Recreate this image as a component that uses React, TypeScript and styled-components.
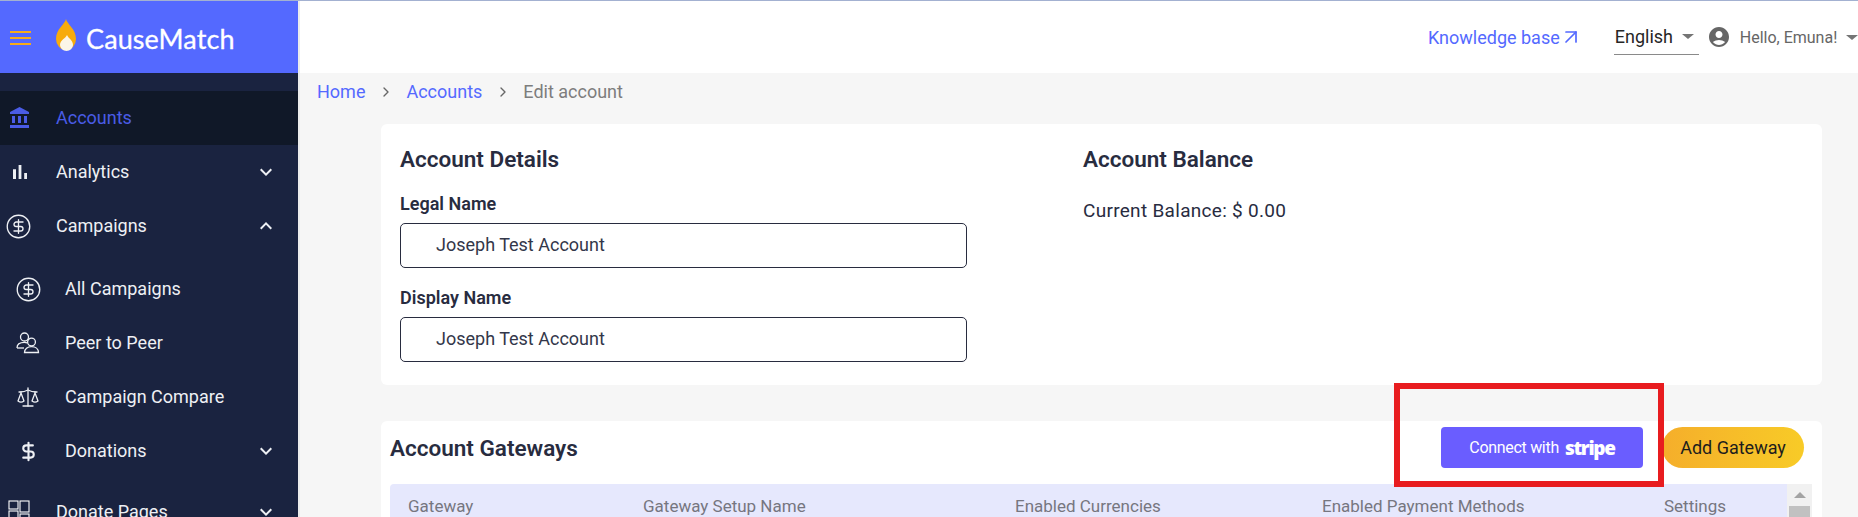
import * as React from 'react';
import styled, { createGlobalStyle } from 'styled-components';
import { ArrowUpRight, ChevronRight, CircleDollarSign, DollarSign, Scale } from 'lucide-react';

const GlobalStyle = createGlobalStyle`
  html, body {
    margin: 0;
    padding: 0;
    height: 100%;
    overflow: hidden;
    background: #f6f6f6;
    font-family: Roboto, "Liberation Sans", sans-serif;
  }
`;

const Page = styled.div`
  width: 1858px;
  height: 517px;
  overflow: hidden;
  border-top: 1px solid #a3b1d1;
  box-sizing: border-box;
  display: flex;
`;

const Sidebar = styled.aside`
  width: 298px;
  flex: none;
  background: #1a2340;
  border-right: 2px solid #ececec;
`;

const Brand = styled.div`
  height: 72px;
  background: #5469ff;
  display: flex;
  align-items: center;
  padding-left: 10px;
`;

const Burger = styled.span`
  width: 21px;
  height: 14px;
  border-top: 2px solid #f7ab1a;
  border-bottom: 2px solid #f7ab1a;
  box-sizing: border-box;
  position: relative;
  margin-right: 24px;
  margin-top: 2px;
  &::after {
    content: '';
    position: absolute;
    left: 0;
    right: 0;
    top: 4px;
    height: 2px;
    background: #f7ab1a;
  }
`;

const Flame = styled.svg`
  margin-top: -4px;
  flex: none;
`;

const Wordmark = styled.span`
  font-family: Lato, sans-serif;
  font-size: 27px;
  font-weight: 400;
  color: #fff;
  margin-left: 9px;
  margin-top: 3px;
  letter-spacing: 0.1px;
  -webkit-text-stroke: 0.3px #fff;
`;

const Nav = styled.nav`
  padding-top: 18px;
`;

const NavRow = styled.div<{ $active?: boolean; $sub?: boolean; $gapTop?: number }>`
  height: 54px;
  display: flex;
  align-items: center;
  padding-left: ${(p) => (p.$sub ? 16 : 8)}px;
  padding-right: 20px;
  margin-top: ${(p) => p.$gapTop ?? 0}px;
  background: ${(p) => (p.$active ? '#101828' : 'transparent')};
  color: ${(p) => (p.$active ? '#4a5ce6' : '#eef0f4')};
  font-size: 18px;
`;

const NavIcon = styled.span<{ $sub?: boolean }>`
  width: 24px;
  height: 24px;
  flex: none;
  display: flex;
  align-items: center;
  justify-content: center;
  margin-right: ${(p) => (p.$sub ? 25 : 24)}px;
`;

const NavLabel = styled.span`
  flex: 1;
  padding-bottom: 2px;
`;

const TopCoin = styled(CircleDollarSign)`
  margin-left: -3px;
  flex: none;
`;

const SubCoin = styled(CircleDollarSign)`
  flex: none;
`;

const TopBar = styled.header`
  height: 72px;
  background: #fff;
  display: flex;
  align-items: center;
`;

const KnowledgeLink = styled.a`
  display: flex;
  flex: none;
  align-items: center;
  margin-left: 1128px;
  color: #5469ff;
  font-size: 18px;
  white-space: nowrap;
  svg {
    margin-left: -1px;
    flex: none;
  }
`;

const LangSelect = styled.div`
  width: 85px;
  height: 36px;
  flex: none;
  margin-left: 31px;
  border-bottom: 1px solid #8a8a8a;
  box-sizing: border-box;
  display: flex;
  align-items: center;
  padding-left: 1px;
  font-size: 18px;
  color: #262626;
`;

const Caret = styled.span`
  width: 0;
  height: 0;
  margin-left: 9px;
  border-left: 6px solid transparent;
  border-right: 6px solid transparent;
  border-top: 5px solid #757575;
`;

const User = styled.div`
  display: flex;
  align-items: center;
  margin-left: 8px;
  color: #666;
  font-size: 16px;
  white-space: nowrap;
  svg {
    margin-right: 9px;
  }
`;

const Main = styled.main`
  flex: 1;
  min-width: 0;
`;

const Crumbs = styled.div`
  height: 37px;
  padding: 0 0 2px 17px;
  display: flex;
  align-items: center;
  gap: 12.5px;
  font-size: 18px;
  color: #7d7d7d;
  a {
    color: #5469ff;
  }
  svg {
    color: #666;
  }
`;

const Content = styled.div`
  padding: 12px 36px 0 81px;
`;

const Card = styled.section`
  background: #fff;
  border-radius: 6px;
`;

const DetailsCard = styled(Card)`
  height: 261px;
  margin-bottom: 36px;
  padding: 22px 19px 0;
  box-sizing: border-box;
  display: grid;
  grid-template-columns: 683px 1fr;
`;

const Heading = styled.h2`
  margin: 0;
  font-size: 22.5px;
  line-height: 26px;
  font-weight: 600;
  color: #282c3f;
`;

const FieldLabel = styled.div`
  margin-top: 22px;
  margin-bottom: 9px;
  font-size: 18px;
  line-height: 20px;
  font-weight: 600;
  color: #282c3f;
`;

const NameBox = styled.div`
  width: 567px;
  height: 45px;
  box-sizing: border-box;
  border: 1px solid #282c3f;
  border-radius: 5px;
  padding: 0 0 2px 35px;
  display: flex;
  align-items: center;
  font-size: 18px;
  color: #33374a;
  & + div {
    margin-top: 20px;
  }
`;

const BalanceText = styled.p`
  margin: 29px 0 0;
  font-size: 19px;
  line-height: 20px;
  letter-spacing: 0.3px;
  color: #282c3f;
`;

const GatewaysCard = styled(Card)`
  position: relative;
  padding: 6px 9px 0;
  height: 120px;
`;

const GatewayHeader = styled.div`
  display: flex;
  align-items: center;
  height: 41px;
  margin-bottom: 16px;
`;

const GatewayTitle = styled(Heading)`
  flex: 1;
`;

const StripeButton = styled.button`
  width: 202px;
  height: 41px;
  border: 0;
  border-radius: 4px;
  background: #6a5dff;
  color: #fff;
  font-family: Roboto, sans-serif;
  font-size: 16px;
  display: flex;
  align-items: center;
  justify-content: center;
  gap: 6px;
  letter-spacing: -0.3px;
`;

const StripeWord = styled.span`
  font-family: "Open Sans", sans-serif;
  font-size: 19px;
  font-weight: 800;
  letter-spacing: -1.3px;
`;

const AddButton = styled.button`
  width: 142px;
  height: 41px;
  margin-left: 19px;
  margin-right: 9px;
  border: 0;
  border-radius: 21px;
  background: linear-gradient(90deg, #f5ae2b, #f8cb27);
  color: #1d1d1d;
  font-family: Roboto, sans-serif;
  font-size: 18px;
  padding: 0;
`;

const RedBox = styled.div`
  position: absolute;
  left: 1013px;
  top: -38px;
  width: 270px;
  height: 104px;
  box-sizing: border-box;
  border: 6px solid #e81c1f;
  pointer-events: none;
`;

const TableRow = styled.div`
  display: flex;
`;

const TableHead = styled.div`
  width: 1397px;
  height: 60px;
  background: #e6e8fd;
  border-radius: 4px 0 0 0;
  display: grid;
  grid-template-columns: 235px 372px 307px 342px 1fr;
  padding: 13px 0 0 18px;
  box-sizing: border-box;
  font-size: 17px;
  line-height: 19px;
  color: #767680;
`;

const Scrollbar = styled.div`
  width: 25px;
  background: #f1f1f1;
  padding-top: 8px;
  box-sizing: border-box;
`;

const ScrollArrow = styled.div`
  width: 0;
  height: 0;
  margin: 0 auto 8px;
  border-left: 6px solid transparent;
  border-right: 6px solid transparent;
  border-bottom: 6px solid #a3a3a3;
`;

const ScrollThumb = styled.div`
  height: 40px;
  margin: 0 2px;
  background: #c1c1c1;
`;

const MuiIcon = ({ d, size = 24, color = 'currentColor' }: { d: string; size?: number; color?: string }) => (
  <svg width={size} height={size} viewBox="0 0 24 24" fill={color}>
    <path d={d} />
  </svg>
);

const BANK = 'M4 10v7h3v-7H4zm6 0v7h3v-7h-3zM2 22h19v-3H2v3zm14-12v7h3v-7h-3zm-4.5-9L2 6v2h19V6l-9.5-5z';
const BARS = 'M5 9.2h3V19H5zM10.6 5h2.8v14h-2.8zm5.6 8H19v6h-2.8z';
const DOWN = 'M16.59 8.59 12 13.17 7.41 8.59 6 10l6 6 6-6z';
const UP = 'm12 8-6 6 1.41 1.41L12 10.83l4.59 4.58L18 14z';
const PERSON =
  'M12 2C6.48 2 2 6.48 2 12s4.48 10 10 10 10-4.48 10-10S17.52 2 12 2zm0 4c1.93 0 3.5 1.57 3.5 3.5S13.93 13 12 13s-3.5-1.57-3.5-3.5S10.07 6 12 6zm0 14c-2.03 0-4.43-.82-6.14-2.88C7.55 15.8 9.68 15 12 15s4.45.8 6.14 2.12C16.43 19.18 14.03 20 12 20z';

const FlameLogo = () => (
  <Flame width="22" height="32" viewBox="0 0 22 32">
    <path d="M11 0c1 5 10 10 10 20a10 11 0 0 1-20 0C1 10 10 5 11 0z" fill="#f7ab0c" />
    <path d="M12 16c1 3 6 5 6 10a6 5.500 0 0 1-13 0c0-5 6-7 7-10z" fill="#fbf5e8" />
  </Flame>
);

const PagesIcon = () => (
  <svg width="24" height="24" viewBox="0 0 24 24" fill="none" stroke="#fff" strokeWidth="1.1">
    <rect x="1" y="1" width="9" height="8" />
    <rect x="12" y="1" width="9" height="11" />
    <rect x="1" y="11" width="9" height="11" />
    <rect x="12" y="14" width="9" height="8" />
  </svg>
);

// two overlapping people, the front one lower and to the right
const PeerIcon = () => (
  <svg width="24" height="24" viewBox="0 0 24 24" fill="none" stroke="#eef0f4" strokeWidth="1.3">
    <circle cx="8.5" cy="6" r="4" />
    <path d="M1 17c0-3.5 3-5.6 7.500-5.600 1 0 2 .1 2.800.4" />
    <path d="M1 17h7" />
    <circle cx="15.5" cy="11" r="3.9" />
    <path d="M8.500 21.500c0-3.500 3-5.800 7-5.800s7 2.300 7 5.800z" />
  </svg>
);

export default function App() {
  return (
    <>
      <GlobalStyle />
      <Page>
        <Sidebar>
          <Brand>
            <Burger />
            <FlameLogo />
            <Wordmark>CauseMatch</Wordmark>
          </Brand>
          <Nav>
            <NavRow $active>
              <NavIcon><MuiIcon d={BANK} /></NavIcon>
              <NavLabel>Accounts</NavLabel>
            </NavRow>
            <NavRow>
              <NavIcon><MuiIcon d={BARS} size={28} /></NavIcon>
              <NavLabel>Analytics</NavLabel>
              <MuiIcon d={DOWN} />
            </NavRow>
            <NavRow>
              <NavIcon><TopCoin size={27} strokeWidth={1.2} /></NavIcon>
              <NavLabel>Campaigns</NavLabel>
              <MuiIcon d={UP} />
            </NavRow>
            <NavRow $sub $gapTop={9}>
              <NavIcon $sub><SubCoin size={27} strokeWidth={1.2} /></NavIcon>
              <NavLabel>All Campaigns</NavLabel>
            </NavRow>
            <NavRow $sub>
              <NavIcon $sub><PeerIcon /></NavIcon>
              <NavLabel>Peer to Peer</NavLabel>
            </NavRow>
            <NavRow $sub>
              <NavIcon $sub><Scale size={24} strokeWidth={1.3} /></NavIcon>
              <NavLabel>Campaign Compare</NavLabel>
            </NavRow>
            <NavRow $sub>
              <NavIcon $sub><DollarSign size={21} strokeWidth={2.4} /></NavIcon>
              <NavLabel>Donations</NavLabel>
              <MuiIcon d={DOWN} />
            </NavRow>
            <NavRow $gapTop={7}>
              <NavIcon><PagesIcon /></NavIcon>
              <NavLabel>Donate Pages</NavLabel>
              <MuiIcon d={DOWN} />
            </NavRow>
          </Nav>
        </Sidebar>
        <Main>
          <TopBar>
            <KnowledgeLink>
              Knowledge base
              <ArrowUpRight size={24} strokeWidth={1.7} />
            </KnowledgeLink>
            <LangSelect>
              English
              <Caret />
            </LangSelect>
            <User>
              <MuiIcon d={PERSON} size={24} color="#666" />
              Hello, Emuna!
              <Caret />
            </User>
          </TopBar>
          <Crumbs>
            <a>Home</a>
            <ChevronRight size={16} />
            <a>Accounts</a>
            <ChevronRight size={16} />
            <span>Edit account</span>
          </Crumbs>
          <Content>
            <DetailsCard>
              <div>
                <Heading>Account Details</Heading>
                <FieldLabel>Legal Name</FieldLabel>
                <NameBox>Joseph Test Account</NameBox>
                <FieldLabel>Display Name</FieldLabel>
                <NameBox>Joseph Test Account</NameBox>
              </div>
              <div>
                <Heading>Account Balance</Heading>
                <BalanceText>Current Balance: $ 0.00</BalanceText>
              </div>
            </DetailsCard>
            <GatewaysCard>
              <GatewayHeader>
                <GatewayTitle>Account Gateways</GatewayTitle>
                <StripeButton>
                  Connect with <StripeWord>stripe</StripeWord>
                </StripeButton>
                <AddButton>Add Gateway</AddButton>
              </GatewayHeader>
              <TableRow>
                <TableHead>
                  <span>Gateway</span>
                  <span>Gateway Setup Name</span>
                  <span>Enabled Currencies</span>
                  <span>Enabled Payment Methods</span>
                  <span>Settings</span>
                </TableHead>
                <Scrollbar>
                  <ScrollArrow />
                  <ScrollThumb />
                </Scrollbar>
              </TableRow>
              <RedBox />
            </GatewaysCard>
          </Content>
        </Main>
      </Page>
    </>
  );
}
